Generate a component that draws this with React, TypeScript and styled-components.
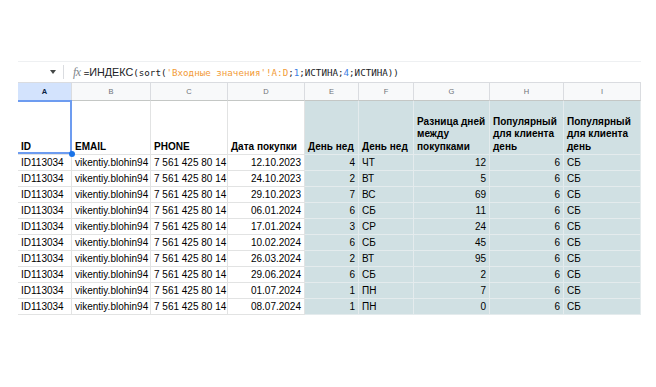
import React from 'react';
import styled, { createGlobalStyle, css } from 'styled-components';

const GlobalStyle = createGlobalStyle`
    body {
        margin: 0;
        background: #ffffff;
        font-family: 'Liberation Sans', Arial, sans-serif;
    }
`;

const COLS = [54, 79, 77, 77, 54, 55, 76, 74, 77];
const LETTERS = ['A', 'B', 'C', 'D', 'E', 'F', 'G', 'H', 'I'];

const rows: [string, number, string, number][] = [
    ['12.10.2023', 4, 'ЧТ', 12],
    ['24.10.2023', 2, 'ВТ', 5],
    ['29.10.2023', 7, 'ВС', 69],
    ['06.01.2024', 6, 'СБ', 11],
    ['17.01.2024', 3, 'СР', 24],
    ['10.02.2024', 6, 'СБ', 45],
    ['26.03.2024', 2, 'ВТ', 95],
    ['29.06.2024', 6, 'СБ', 2],
    ['01.07.2024', 1, 'ПН', 7],
    ['08.07.2024', 1, 'ПН', 0],
];

const Sheet = styled.div`
    padding: 61px 0 0 18px;
    width: 623px;
`;

const FormulaBar = styled.div`
    display: flex;
    align-items: center;
    height: 22px;
    box-sizing: border-box;
    border-top: 1px solid #eef0f2;
    border-bottom: 1px solid #dadce0;
`;

const Arrow = styled.span`
    margin-left: 32px;
    width: 0;
    height: 0;
    border-left: 3.5px solid transparent;
    border-right: 3.5px solid transparent;
    border-top: 4px solid #444746;
`;

const Divider = styled.span`
    margin-left: 7px;
    width: 1px;
    height: 14px;
    background: #dadce0;
`;

const Fx = styled.span`
    margin-left: 9px;
    font-family: 'Liberation Serif', serif;
    font-style: italic;
    font-size: 12px;
    color: #80868b;
    letter-spacing: -0.5px;
`;

const Formula = styled.span`
    margin-left: 3px;
    font-family: 'DejaVu Sans Mono', monospace;
    font-size: 9.2px;
    color: #202124;
    white-space: pre;
`;

const FnName = styled.span`
    font-family: 'Liberation Sans', Arial, sans-serif;
    font-size: 10.8px;
`;

const Ref = styled.span`
    color: #f29b38;
`;

const Num = styled.span`
    color: #3d7ee3;
`;

const Grid = styled.div`
    display: grid;
    grid-template-columns: ${COLS.map((c) => `${c}px`).join(' ')};
    grid-template-rows: 18px 54px repeat(${rows.length}, 16px);
`;

const ColHead = styled.div<{ $active?: boolean }>`
    display: flex;
    align-items: center;
    justify-content: center;
    box-sizing: border-box;
    border-right: 1px solid #dadce0;
    border-bottom: 1px solid #c4c7c5;
    background: ${(p) => (p.$active ? '#d3e3fd' : '#f8f9fa')};
    color: ${(p) => (p.$active ? '#0b1f45' : '#6f7378')};
    font-weight: ${(p) => (p.$active ? 700 : 400)};
    font-size: 7.5px;
`;

const Cell = styled.div<{ $fill?: boolean; $align?: 'left' | 'right'; $head?: boolean; $selected?: boolean }>`
    position: relative;
    display: flex;
    box-sizing: border-box;
    padding: 0 3px;
    overflow: hidden;
    white-space: nowrap;
    border-right: 1px solid ${(p) => (p.$fill ? '#e4ebed' : '#e2e3e3')};
    border-bottom: 1px solid ${(p) => (p.$fill ? '#e4ebed' : '#e2e3e3')};
    background: ${(p) => (p.$fill ? '#d0e0e3' : '#ffffff')};
    color: #000000;
    font-size: 10px;
    align-items: center;
    justify-content: ${(p) => (p.$align === 'right' ? 'flex-end' : 'flex-start')};
    ${(p) =>
        p.$head &&
        css`
            align-items: flex-end;
            white-space: normal;
            font-weight: 700;
            line-height: 12.3px;
            padding-bottom: 1px;
        `}
    ${(p) =>
        p.$selected &&
        css`
            overflow: visible;
            &::before {
                content: '';
                position: absolute;
                top: -1px;
                left: 0;
                right: -1px;
                bottom: 0;
                border: 2px solid #6d9cf0;
                border-left: none;
                pointer-events: none;
            }
            &::after {
                content: '';
                position: absolute;
                right: -4px;
                bottom: -3px;
                width: 6px;
                height: 6px;
                border-radius: 50%;
                background: #1a73e8;
                z-index: 2;
            }
        `}
`;

const HEADERS = ['ID', 'EMAIL', 'PHONE', 'Дата покупки', 'День нед', 'День нед', 'Разница дней между покупками', 'Популярный для клиента день', 'Популярный для клиента день'];

export default function App() {
    return (
        <>
            <GlobalStyle />
            <Sheet>
                <FormulaBar>
                    <Arrow />
                    <Divider />
                    <Fx>fx</Fx>
                    <Formula>
                        =<FnName>ИНДЕКС</FnName>(sort(<Ref>'Входные значения'!A:D</Ref>;<Num>1</Num>;ИСТИНА;<Num>4</Num>;ИСТИНА))
                    </Formula>
                </FormulaBar>
                <Grid>
                    {LETTERS.map((l, i) => (
                        <ColHead key={l} $active={i === 0}>
                            {l}
                        </ColHead>
                    ))}
                    {HEADERS.map((h, i) => (
                        <Cell key={'h' + i} $head $fill={i >= 4} $selected={i === 0}>
                            {h}
                        </Cell>
                    ))}
                    {rows.map((r, i) => (
                        <React.Fragment key={i}>
                            <Cell>ID113034</Cell>
                            <Cell>vikentiy.blohin94</Cell>
                            <Cell>7 561 425 80 14</Cell>
                            <Cell $align="right">{r[0]}</Cell>
                            <Cell $fill $align="right">{r[1]}</Cell>
                            <Cell $fill>{r[2]}</Cell>
                            <Cell $fill $align="right">{r[3]}</Cell>
                            <Cell $fill $align="right">6</Cell>
                            <Cell $fill>СБ</Cell>
                        </React.Fragment>
                    ))}
                </Grid>
            </Sheet>
        </>
    );
}
